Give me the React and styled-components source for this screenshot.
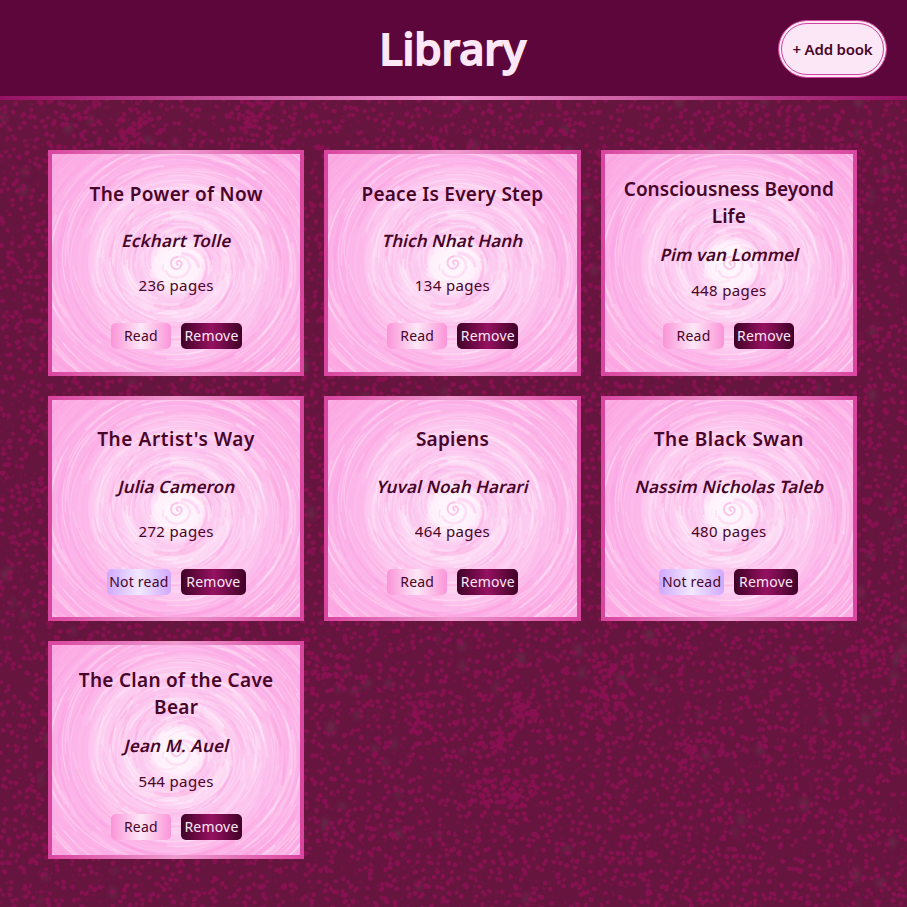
import React from "react";
import styled, { createGlobalStyle } from "styled-components";

/* Deterministic pseudo random numbers for the generated textures. */
function makeRandom(seed) {
  let s = seed;
  return () => {
    s = (s * 1664525 + 1013904223) % 4294967296;
    return s / 4294967296;
  };
}

const toUrl = (svg) => `url("data:image/svg+xml,${encodeURIComponent(svg)}")`;

function speckles() {
  const rnd = makeRandom(11);
  const dots = ["", "", "", ""];
  const put = (x, y) => {
    const k = Math.floor(rnd() * 4);
    dots[k] += `M${x.toFixed(1)} ${y.toFixed(1)}l${(rnd() * 2 - 1).toFixed(1)} ${(rnd() * 2 - 1).toFixed(1)}`;
  };
  for (let y = 0; y < 907; y += 8.2) {
    for (let x = 0; x < 907; x += 8.2) {
      if (rnd() < 0.92) put(x + rnd() * 9, y + rnd() * 9);
      if (rnd() < 0.25) put(x + rnd() * 9, y + rnd() * 9);
    }
  }
  const clusters = [[422, 712], [522, 710], [613, 670], [325, 675], [500, 745], [605, 705], [515, 795], [485, 790], [690, 750], [870, 650], [130, 130], [250, 120]];
  clusters.forEach(([cx, cy]) => {
    for (let i = 0; i < 38; i++) {
      const a = rnd() * 6.283;
      const r = rnd() * 22;
      put(cx + Math.cos(a) * r, cy + Math.sin(a) * r);
    }
  });
  let haze = "";
  for (let i = 0; i < 260; i++) {
    const x = rnd() * 907;
    const y = rnd() * 907;
    haze += `<ellipse cx="${x.toFixed(0)}" cy="${y.toFixed(0)}" rx="${(2 + rnd() * 3).toFixed(1)}" ry="${(3 + rnd() * 5).toFixed(1)}"/>`;
  }
  const paths = dots
    .map((d, i) => `<path d="${d}" stroke-width="${[2.6, 3.8, 4.2, 4.6][i]}" stroke-opacity="${[0.4, 0.75, 0.8, 0.85][i]}"/>`)
    .join("");
  return toUrl(
    `<svg xmlns="http://www.w3.org/2000/svg" width="907" height="907"><defs><filter id="h" color-interpolation-filters="sRGB"><feGaussianBlur stdDeviation="2.5"/></filter><filter id="d" x="0" y="0" width="1" height="1" color-interpolation-filters="sRGB"><feGaussianBlur stdDeviation=".6"/></filter></defs><rect width="907" height="907" fill="#66153f"/><g fill="#6a3a50" fill-opacity=".5" filter="url(#h)">${haze}</g><g fill="none" stroke="#8c1153" stroke-linecap="round" filter="url(#d)">${paths}</g></svg>`
  );
}

function swirl() {
  const rnd = makeRandom(7);
  const cx = 125;
  const cy = 112;
  let out = "";
  for (let i = 0; i < 620; i++) {
    const r = 8 + Math.pow(rnd(), 0.8) * 165;
    const start = rnd() * 6.283;
    const sweep = 0.3 + rnd() * 1.1;
    const drift = (rnd() - 0.2) * 14;
    let d = "";
    for (let k = 0; k <= 8; k++) {
      const a = start + (sweep * k) / 8;
      const rr = r + (drift * k) / 8;
      d += `${k ? "L" : "M"}${(cx + Math.cos(a) * rr * 1.03).toFixed(1)} ${(cy + Math.sin(a) * rr * 0.96).toFixed(1)}`;
    }
    const pink = rnd() < 0.46;
    out += `<path d="${d}" stroke="${pink ? (rnd() < 0.5 ? "#ff98d3" : "#fa9ce4") : "#fff"}" stroke-width="${(0.5 + rnd() * (pink ? 3.5 : 2.2)).toFixed(1)}" stroke-opacity="${(0.08 + rnd() * 0.22).toFixed(2)}"/>`;
  }
  return toUrl(
    `<svg xmlns="http://www.w3.org/2000/svg" width="248" height="220" viewBox="0 0 248 220"><defs><radialGradient id="g" gradientUnits="userSpaceOnUse" cx="125" cy="112" r="165"><stop offset="0" stop-color="#fffafe"/><stop offset=".13" stop-color="#fff0fb"/><stop offset=".22" stop-color="#fcc8ef"/><stop offset=".3" stop-color="#fddcf5"/><stop offset=".37" stop-color="#fcc4ee"/><stop offset=".48" stop-color="#fdcff1"/><stop offset=".62" stop-color="#fcb6e9"/><stop offset="1" stop-color="#fcaae3"/></radialGradient><filter id="s" x="0" y="0" width="1" height="1" color-interpolation-filters="sRGB"><feGaussianBlur stdDeviation=".5"/></filter></defs><rect width="248" height="220" fill="url(#g)"/><g fill="none" stroke-linecap="round" filter="url(#s)">${out}</g><g fill="none" stroke="#fab4e4" stroke-linecap="round"><path d="M126 112c-3-2-1-5 2-4 4 3 0 9-5 8-6-3-5-11 2-12" stroke-width="2" stroke-opacity=".75"/><path d="M125 104c10-2 16 8 10 16-6 7-18 6-21-2" stroke-width="2.6" stroke-opacity=".35"/></g></svg>`
  );
}

const SPECKLES = speckles();
const SWIRL = swirl();

const GlobalStyle = createGlobalStyle`
  *, *::before, *::after { box-sizing: border-box; }
  body {
    margin: 0;
    font-family: "Noto Sans", sans-serif;
    color: #470529;
  }
`;

const Page = styled.div`
  min-height: 907px;
  background: #65143f ${SPECKLES};
`;

const Header = styled.header`
  display: grid;
  grid-template-columns: 1fr auto 1fr;
  align-items: center;
  height: 100px;
  padding: 2px 20px 0 21px;
  background: #5d063b;
  border-bottom: 4px solid;
  border-image: linear-gradient(to right, #951161, #ec8fcb, #951161) 1;
`;

const Heading = styled.h1`
  grid-column: 2;
  margin: 0;
  padding: 0 3px 3px 0;
  font-size: 44px;
  line-height: 60px;
  font-weight: 500;
  letter-spacing: -0.1px;
  color: #fce7f6;
  -webkit-text-stroke: 1.8px #fce7f6;
  stroke-linejoin: round;
`;

const AddButton = styled.button`
  justify-self: end;
  width: 109px;
  height: 58px;
  padding: 0;
  border: 4px double #d3439b;
  border-radius: 30px;
  background: #fce7f6;
  color: #470529;
  font: 600 15px/20px "Noto Sans", sans-serif;
  letter-spacing: -0.2px;
  white-space: nowrap;
`;

const Shelf = styled.main`
  display: grid;
  grid-template-columns: repeat(3, 1fr);
  grid-template-rows: 225.67px 225.67px 217.5px;
  gap: 20px;
  padding: 50px 50px 48px 48px;
`;

const Card = styled.article`
  display: flex;
  flex-direction: column;
  align-items: center;
  padding: 15px;
  border: 4px solid;
  border-image: linear-gradient(to right, #d9469f, #ef9bcf, #d9469f) 1;
  background: ${SWIRL} center / cover;
  text-align: center;
`;

const Details = styled.div`
  display: flex;
  flex-direction: column;
  justify-content: space-around;
  width: 100%;
  height: 139px;
  padding-top: 1px;
  margin-bottom: 15px;
`;

const Title = styled.h2`
  margin: 0;
  font-size: 19px;
  line-height: 27px;
  font-weight: 600;
  letter-spacing: ${(p) => p.$spacing}px;
`;

/* Slanted upright letterforms rather than the family's true italic. */
const Author = styled.p`
  margin: 0;
  padding-left: 2px;
  font-size: 17px;
  line-height: 24.6px;
  font-weight: 600;
  letter-spacing: ${(p) => p.$spacing}px;
  transform: skewX(-14deg);
`;

const Pages = styled.p`
  margin: 0;
  font-size: 15px;
  line-height: 21.8px;
  letter-spacing: 0.35px;
`;

const Actions = styled.div`
  display: grid;
  grid-template-columns: repeat(2, ${(p) => (p.$read ? 60.6 : 64.5)}px);
  gap: 10px;
`;

const ActionButton = styled.button`
  height: 26px;
  padding: 0;
  border: 0;
  border-radius: 5px;
  font: 400 14px/20px "Noto Sans", sans-serif;
  letter-spacing: 0.2px;
  white-space: nowrap;
  color: #470529;
`;

const StatusButton = styled(ActionButton)`
  background: ${(p) =>
    p.$read
      ? "linear-gradient(to right, #fb94d8, #fce7f6, #fb94d8)"
      : "linear-gradient(to right, #d0a8ff, #f2e8ff, #d0a8ff)"};
`;

const RemoveButton = styled(ActionButton)`
  color: #fce7f6;
  background: linear-gradient(to right, #3f0226, #951161, #3f0226);
`;

const books = [
  { title: "The Power of Now", author: "Eckhart Tolle", pages: 236, read: true, titleSpacing: 0.33, authorSpacing: 0.25 },
  { title: "Peace Is Every Step", author: "Thich Nhat Hanh", pages: 134, read: true, titleSpacing: 0.22, authorSpacing: 0.1 },
  { title: "Consciousness Beyond Life", author: "Pim van Lommel", pages: 448, read: true, titleSpacing: 0.02, authorSpacing: 0.05 },
  { title: "The Artist's Way", author: "Julia Cameron", pages: 272, read: false, titleSpacing: 0.6, authorSpacing: 0.1 },
  { title: "Sapiens", author: "Yuval Noah Harari", pages: 464, read: true, titleSpacing: 0.25, authorSpacing: 0.1 },
  { title: "The Black Swan", author: "Nassim Nicholas Taleb", pages: 480, read: false, titleSpacing: 0.5, authorSpacing: 0.18 },
  { title: "The Clan of the Cave Bear", author: "Jean M. Auel", pages: 544, read: true, titleSpacing: 0.28, authorSpacing: 0.2 },
];

function BookCard({ book }) {
  return (
    <Card>
      <Details>
        <Title $spacing={book.titleSpacing}>{book.title}</Title>
        <Author $spacing={book.authorSpacing}>{book.author}</Author>
        <Pages>{book.pages} pages</Pages>
      </Details>
      <Actions $read={book.read}>
        <StatusButton $read={book.read}>{book.read ? "Read" : "Not read"}</StatusButton>
        <RemoveButton>Remove</RemoveButton>
      </Actions>
    </Card>
  );
}

export default function App() {
  return (
    <Page>
      <GlobalStyle />
      <Header>
        <Heading>Library</Heading>
        <AddButton>+ Add book</AddButton>
      </Header>
      <Shelf>
        {books.map((book) => (
          <BookCard key={book.title} book={book} />
        ))}
      </Shelf>
    </Page>
  );
}
